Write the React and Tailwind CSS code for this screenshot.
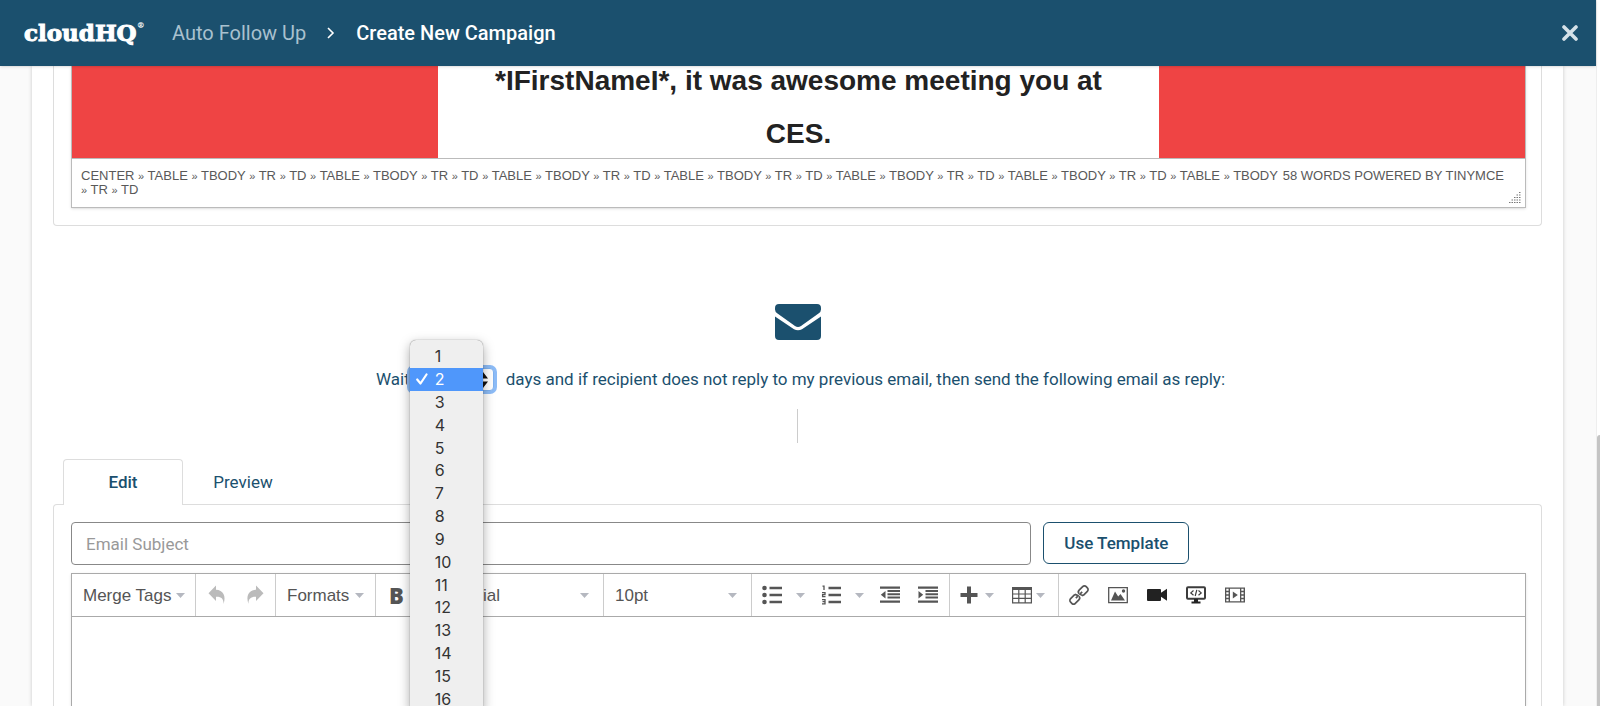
import React, { useState } from 'react';

const DAYS = Array.from({ length: 16 }, (_, i) => i + 1);

const PATH = Array.from({ length: 7 }, () => ['table', 'tbody', 'tr', 'td']).flat();

const Caret = ({ className = '' }) => (
    <svg viewBox="0 0 9 5" className={`w-[9px] h-[5px] shrink-0 ${className}`} fill="#b5b8c0">
        <path d="M0 0h9L4.500 5z" />
    </svg>
);

const Icon = ({ children }) => (
    <svg viewBox="0 0 20 20" className="w-5 h-5 shrink-0" fill="#555">
        {children}
    </svg>
);

const Undo = () => (
    <Icon>
        <path fill="#bbb" d="M9 .5v4.300c7 .2 10.500 6.200 7.500 14.200.3-5-2-7.500-7.500-7.300V16L1.500 8.300z" />
    </Icon>
);

const Redo = () => (
    <Icon>
        <path fill="#bbb" d="M11 .5v4.300C4 5 .5 11 3.500 19c-.3-5 2-7.500 7.500-7.300V16l7.500-7.700z" />
    </Icon>
);

const BulletList = () => (
    <Icon>
        <circle cx="2.500" cy="3" r="2.300" />
        <circle cx="2.500" cy="10" r="2.300" />
        <circle cx="2.500" cy="17" r="2.300" />
        <path d="M7.500 1.800H20v2.400H7.500zM7.500 8.800H20v2.400H7.500zM7.500 15.800H20v2.400H7.500z" />
    </Icon>
);

const NumberList = () => (
    <Icon>
        <path d="M7.500 1.800H20v2.400H7.500zM7.500 8.800H20v2.400H7.500zM7.500 15.800H20v2.400H7.500z" />
        <path fill="none" stroke="#555" strokeWidth="1.300" d="M1.500 1.200H3V5M1 7.700h3v2H1.600v2H4.500M1 14.600h3v4.200H1M1.500 16.700H4" />
    </Icon>
);

const Outdent = () => (
    <Icon>
        <path d="M0 1.500h20v2.200H0zM7.500 5h12.500v2H7.500zM7.500 8.300h12.500v2H7.500zM7.500 11.600h12.500v2H7.500zM0 15.600h20v2.200H0zM5.500 6v7.500L.8 9.800z" />
    </Icon>
);

const Indent = () => (
    <Icon>
        <path d="M0 1.500h20v2.200H0zM7.500 5h12.500v2H7.500zM7.500 8.300h12.500v2H7.500zM7.500 11.600h12.500v2H7.500zM0 15.600h20v2.200H0zM.5 6v7.500l4.700-3.700z" />
    </Icon>
);

const Plus = () => (
    <Icon>
        <path d="M8 1.500h4V8h6.500v4H12v6.500H8V12H1.500V8H8z" />
    </Icon>
);

const Grid = () => (
    <Icon>
        <path fillRule="evenodd" d="M0 2h20v16.500H0zM1.200 5v3.500h5V5zm6.200 0v3.500h5.200V5zm6.400 0v3.500h5V5zM1.200 9.600v3.200h5V9.600zm6.200 0v3.200h5.200V9.600zm6.400 0v3.200h5V9.600zM1.200 14v3.300h5V14zm6.200 0v3.300h5.200V14zm6.400 0v3.300h5V14z" />
    </Icon>
);

const Chain = () => (
    <Icon>
        <g fill="none" stroke="#555" strokeWidth="1.700" transform="rotate(-45 10 10)">
            <path d="M7.500 6.700H1.500a2.500 2.500 0 0 0-2.500 2.500v1.600a2.500 2.500 0 0 0 2.500 2.500h5A2.500 2.500 0 0 0 9 10.800" />
            <path d="M12.500 13.300h6a2.500 2.500 0 0 0 2.500-2.500V9.200a2.500 2.500 0 0 0-2.500-2.500h-5A2.500 2.500 0 0 0 11 9.200" />
            <path d="M5.500 10H8M12 10h2.500M9 10.800q0-1.500-1.500-4.100M11 9.200q0 1.500 1.500 4.100" />
        </g>
    </Icon>
);

const Picture = () => (
    <Icon>
        <path fill="none" stroke="#555" strokeWidth="1.300" d="M.7 2.700h18.600v15H.7z" />
        <path d="M3 15.500 7 6.500l3.200 5 2.300-2.500 4.500 6.500z" />
        <circle cx="15.500" cy="6" r="1.700" />
    </Icon>
);

const Camera = () => (
    <Icon>
        <path fill="#222" d="M1 4h12q1 0 1 1v2.800L20 3.800v12l-6-4V15q0 1-1 1H1q-1 0-1-1V5q0-1 1-1z" />
    </Icon>
);

const CodeScreen = () => (
    <Icon>
        <path fill="none" stroke="#3c3c3c" strokeWidth="2" d="M2 2.300h16q1 0 1 1v9.400q0 1-1 1H2q-1 0-1-1V3.300q0-1 1-1z" />
        <path fill="none" stroke="#3c3c3c" strokeWidth="1.200" d="M7.500 5.500 4.800 7.900l2.700 2.400M12.500 5.500l2.700 2.400-2.700 2.400M10.800 4.800 9.200 11" />
        <path fill="#222" d="M8 14h4v2.500h2.500v2h-9v-2H8z" />
    </Icon>
);

const Film = () => (
    <Icon>
        <path fillRule="evenodd" d="M0 2.500h20v15H0zM5 3.700v12.600h10V3.700zM1.300 3.700v2h2.300v-2zm0 3.500v2h2.300v-2zm0 3.500v2h2.300v-2zm0 3.500v2h2.300v-2zm15-10.500v2h2.300v-2zm0 3.500v2h2.300v-2zm0 3.500v2h2.300v-2zm0 3.500v2h2.300v-2z" />
        <path d="M7.800 6.500v7l5-3.500z" />
    </Icon>
);

const Group = ({ children, className = '' }) => (
    <div className={`flex items-center h-full border-r border-[#ccc] ${className}`}>{children}</div>
);

const ToolButton = ({ label, children, className = '' }) => (
    <button type="button" aria-label={label} title={label} className={`flex items-center ${className}`}>
        {children}
    </button>
);

const ToolSelect = ({ label, options, className = '' }) => (
    <div className={`relative flex items-center h-full ${className}`}>
        <select aria-label={label} className="appearance-none w-full h-full bg-transparent pl-[11px] text-[17px] text-[#555] outline-none">
            {options.map((option) => (
                <option key={option}>{option}</option>
            ))}
        </select>
        <Caret className="absolute right-3.5 pointer-events-none" />
    </div>
);

const Header = () => (
    <header className="relative z-10 flex items-center h-[66px] shrink-0 pl-6 pr-[18px] bg-[#1b506e] font-[Roboto,sans-serif] text-xl shadow">
        <a href="#home" className="flex items-start w-[118px] font-['DejaVu_Serif',serif] font-bold text-[23px] leading-7 text-white [-webkit-text-stroke:1px_white]">
            cloudHQ
            <span className="text-[8px] leading-3 [-webkit-text-stroke:0]">®</span>
        </a>
        <nav className="flex items-center ml-[30px]">
            <a href="#auto-follow-up" className="text-[#a9c1cf]">Auto Follow Up</a>
            <svg viewBox="0 0 8 12" className="w-2 h-3 mx-[21px]" fill="none" stroke="#fff" strokeWidth="1.600">
                <path d="m1 1 5 5-5 5" />
            </svg>
            <span className="font-medium text-white">Create New Campaign</span>
        </nav>
        <button type="button" aria-label="Close" className="ml-auto">
            <svg viewBox="0 0 16 16" className="w-4 h-4" fill="none" stroke="#d5e1e8" strokeWidth="3.600" strokeLinecap="round">
                <path d="m2 2 12 12M14 2 2 14" />
            </svg>
        </button>
    </header>
);

const PreviousEmail = () => (
    <section className="mx-[21px] pl-[17px] pr-[15px] pb-[17px] border border-t-0 border-[#ddd] rounded-b">
        <div className="border border-t-0 border-[#bbb] shadow">
            {/* Message body */}
            <div className="flex justify-center h-[92px] bg-[#ef4444] px-[366px]">
                <h1 className="flex-1 px-12 bg-white text-center font-['Liberation_Sans',sans-serif] font-bold text-[28px] leading-[53px] text-[#222] overflow-hidden">
                    <span className="block -mt-3">*IFirstNameI*, it was awesome meeting you at CES.</span>
                </h1>
            </div>
            {/* Element path */}
            <div className="relative flex gap-1 h-[49px] pt-2.5 pl-[9px] pr-[21px] border-t border-[#bbb] font-['Liberation_Sans',sans-serif] text-[13px] leading-[14px] uppercase text-[#595959]">
                <p className="flex-1">
                    center{' '}
                    {PATH.map((tag, i) => (
                        <React.Fragment key={i}>
                            <span className="whitespace-nowrap"><span className="text-[11px]">»</span> {tag}</span>{' '}
                        </React.Fragment>
                    ))}
                </p>
                <p className="shrink-0">58 words powered by TinyMCE</p>
                <svg viewBox="0 0 12 12" className="absolute right-1 bottom-1 w-3 h-3" fill="none" stroke="#777" strokeDasharray="1.500 1">
                    <path d="M0 11.500h12M2.500 9h9.500M5 6.500h7M7.500 4H12M10 1.500h2" />
                </svg>
            </div>
        </div>
    </section>
);

const DaysSelect = ({ value, onChange }) => (
    <div className="relative h-[23px]">
        <select
            id="days"
            value={value}
            onChange={(e) => onChange(Number(e.target.value))}
            className="appearance-none block w-[84px] h-[23px] rounded bg-white border border-[#7fb2f0] ring-3 ring-[#8dbcf7] outline-none"
        >
            {DAYS.map((day) => (
                <option key={day} value={day}>{day}</option>
            ))}
        </select>
        <svg viewBox="0 0 10 16" className="absolute right-1.5 top-1 w-2.5 h-4 pointer-events-none" fill="#111">
            <path d="M0 6.500h10L5 0zM0 9.500h10L5 16z" />
        </svg>
        {/* Open option list */}
        <ul className="absolute z-20 left-0 -top-7 flex flex-col w-[73px] h-[370px] pt-[5px] bg-[#efefef] rounded-t-md shadow-[0_4px_12px_rgba(0,0,0,0.35),0_0_1px_rgba(0,0,0,0.6)] font-[Inter,sans-serif] text-base leading-[22px] text-[#333]">
            {DAYS.map((day) => (
                <li
                    key={day}
                    className={`flex flex-1 items-center ${day === value ? 'bg-[#4f97fb] text-white' : ''}`}
                >
                    <span className="flex justify-center w-[25px]">
                        {day === value && (
                            <svg viewBox="0 0 12 12" className="w-3 h-3" fill="none" stroke="#fff" strokeWidth="2.200" strokeLinecap="round" strokeLinejoin="round">
                                <path d="m1.200 6.500 3.300 4L10.500 1.500" />
                            </svg>
                        )}
                    </span>
                    {day}
                </li>
            ))}
        </ul>
    </div>
);

const Toolbar = () => (
    <div className="flex items-center h-[43px] border-b border-[#aaa] font-['Liberation_Sans',sans-serif] text-[17px] text-[#555]">
        <Group className="w-[124px] pl-[11px]">
            <button type="button" className="flex items-center gap-1">Merge Tags<Caret /></button>
        </Group>
        <Group className="w-20 pl-[11px] gap-[18px]">
            <ToolButton label="Undo"><Undo /></ToolButton>
            <ToolButton label="Redo"><Redo /></ToolButton>
        </Group>
        <Group className="w-[100px] pl-[11px]">
            <button type="button" className="flex items-center gap-1.5">Formats<Caret /></button>
        </Group>
        <Group className="w-[228px] pl-[13px]">
            <ToolButton label="Bold" className="w-[66px] font-['Open_Sans',sans-serif] font-extrabold text-[22px]">B</ToolButton>
            <ToolSelect label="Font Family" options={['Arial', 'Georgia', 'Verdana']} className="flex-1" />
        </Group>
        <Group className="w-[148px]">
            <ToolSelect label="Font Size" options={['10pt', '12pt', '14pt']} className="flex-1" />
        </Group>
        <Group className="w-[198px] pl-2.5">
            <ToolButton label="Bullet list" className="gap-3.5"><BulletList /><Caret /></ToolButton>
            <ToolButton label="Numbered list" className="gap-3.5 ml-4"><NumberList /><Caret /></ToolButton>
            <ToolButton label="Decrease indent" className="ml-4"><Outdent /></ToolButton>
            <ToolButton label="Increase indent" className="ml-[18px]"><Indent /></ToolButton>
        </Group>
        <Group className="w-[109px] pl-[9px]">
            <ToolButton label="Insert" className="gap-1.5"><Plus /><Caret /></ToolButton>
            <ToolButton label="Table" className="gap-1 ml-[18px]"><Grid /><Caret /></ToolButton>
        </Group>
        <div className="flex items-center pl-2.5 gap-[19px]">
            <ToolButton label="Insert link"><Chain /></ToolButton>
            <ToolButton label="Insert image"><Picture /></ToolButton>
            <ToolButton label="Record video"><Camera /></ToolButton>
            <ToolButton label="Source code"><CodeScreen /></ToolButton>
            <ToolButton label="Insert media"><Film /></ToolButton>
        </div>
    </div>
);

export default function App() {
    const [days, setDays] = useState(2);
    const [subject, setSubject] = useState('');

    return (
        <div className="flex h-screen overflow-hidden bg-white">
            <div className="flex flex-1 flex-col min-w-0 bg-[#fafafa]">
                <Header />
                <main className="flex flex-1 flex-col min-h-0 ml-8 mr-[33px] bg-white shadow-[0_0_4px_rgba(0,0,0,0.2)] font-[Roboto,sans-serif] text-[17px] leading-[23px] text-[#1b506e]">
                    <PreviousEmail />

                    {/* Wait step */}
                    <div className="flex flex-col items-center shrink-0 pt-[78px]">
                        <svg viewBox="0 0 46 36" className="w-[46px] h-9" fill="#1b506e">
                            <path d="M4 0h38q4 0 4 4v1.500q0 2.500-2.500 4L26 22q-3 2-6 0L2.500 9.500Q0 8 0 5.500V4q0-4 4-4z" />
                            <path d="M0 12.500 19 25.200q4 2.300 8 0l19-12.700V32q0 4-4 4H4q-4 0-4-4z" />
                        </svg>
                        <div className="flex items-center mt-7 ml-1.5">
                            <label htmlFor="days">Wait</label>
                            <DaysSelect value={days} onChange={setDays} />
                            <span className="ml-3">days and if recipient does not reply to my previous email, then send the following email as reply:</span>
                        </div>
                        <div className="w-px h-[34px] mt-[18px] bg-[#ccc]" />
                    </div>

                    {/* Tabs */}
                    <div className="flex shrink-0 mt-4 ml-[31px]">
                        <button type="button" className="relative z-10 w-[120px] h-[46px] -mb-px bg-white border border-b-0 border-[#ddd] rounded-t font-medium">Edit</button>
                        <button type="button" className="w-[120px] h-[46px] -mb-px">Preview</button>
                    </div>

                    {/* Follow up email */}
                    <section className="flex flex-1 flex-col mx-[21px] pl-[17px] pr-[15px] pt-[17px] border border-b-0 border-[#ddd] rounded-t">
                        <div className="flex items-start gap-3">
                            <input
                                type="text"
                                aria-label="Email Subject"
                                placeholder="Email Subject"
                                value={subject}
                                onChange={(e) => setSubject(e.target.value)}
                                className="w-[66%] h-[43px] px-3.5 bg-white border border-[#888] rounded placeholder:text-[#999] outline-none"
                            />
                            <button type="button" className="h-[42px] px-5 bg-white border border-[#1b506e] rounded-md font-medium">Use Template</button>
                        </div>
                        <div className="flex flex-1 flex-col mt-2 border border-b-0 border-[#aaa] shadow">
                            <Toolbar />
                            <textarea aria-label="Email body" className="flex-1 resize-none outline-none bg-white" />
                        </div>
                    </section>
                </main>
            </div>
            {/* Scrollbar */}
            <div className="w-1 pt-[435px] border-l border-[#eee] bg-white">
                <div className="h-full rounded-tl bg-[#c4c4c4]" />
            </div>
        </div>
    );
}
